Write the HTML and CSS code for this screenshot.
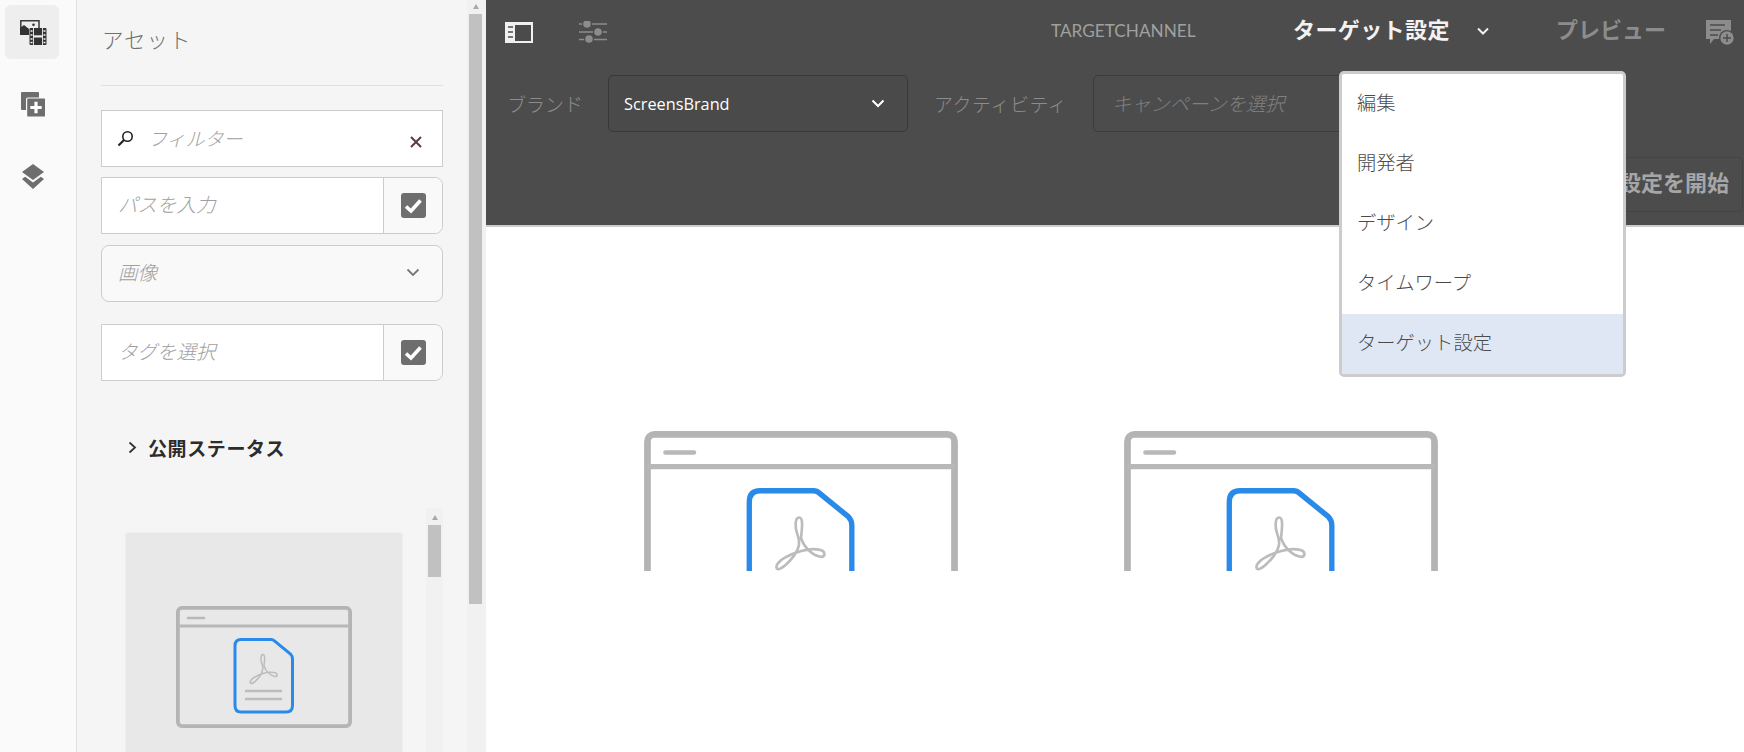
FILE: index.html
```html
<!DOCTYPE html>
<html lang="ja">
<head>
<meta charset="utf-8">
<title>TARGETCHANNEL</title>
<link rel="stylesheet" href="styles.css">
</head>
<body>
<svg class="defs" width="0" height="0" aria-hidden="true">
  <symbol id="pdf-window" viewBox="0 0 176 122">
    <rect x="1.900" y="1.900" width="172.200" height="118.200" rx="4" fill="none" stroke="#b4b4b4" stroke-width="3.800"/>
    <path d="M2 20H174" fill="none" stroke="#b8b8b8" stroke-width="3"/>
    <path d="M12 12H28" fill="none" stroke="#b8b8b8" stroke-width="2.500" stroke-linecap="round"/>
    <path d="M65 33.500H95Q97 33.500 98.500 35L114.500 48Q116.500 50 116.500 53V99.500Q116.500 106 110 106H65Q59 106 59 99.500V40Q59 33.500 65 33.500Z" fill="none" stroke="#2a8aea" stroke-width="3"/>
    <path d="M69 85H106M69 93H106" fill="none" stroke="#bcbcbc" stroke-width="2.400"/>
    <path d="M87 48.500C84.500 48.500 84.500 54 86 58C87.500 62 87.500 65 84 70C81 74 77 77.500 75 77.500C73 76.500 75 73 79 71C84 68 92 65.500 98 66.500C102 67 102 71 99 70.500C95 70 90 66 88 60C88.500 55 89.500 48.500 87 48.500Z" fill="none" stroke="#bcbcbc" stroke-width="1.500"/>
  </symbol>
</svg>

<div class="page">
  <nav class="rail">
    <button class="rail-btn rail-btn-active" type="button" aria-label="アセット">
      <svg width="27" height="25" viewBox="0 0 27 25">
        <path d="M.8 10V.8H19V8" fill="none" stroke="#3a3a3a" stroke-width="1.500"/>
        <path d="M0 15V8L4 5L9 9V15Z" fill="#333"/>
        <circle cx="13.500" cy="4.800" r="1.300" fill="#333"/>
        <rect x="9.500" y="8" width="17" height="17" rx="1" fill="#333"/>
        <path d="M13.500 8V25M22.500 8V25" stroke="#f0f0f0" stroke-width=".9"/>
        <rect x="13.500" y="15.300" width="9" height="2.200" fill="#f0f0f0"/>
        <path d="M10.500 11H12.500M10.500 15H12.500M10.500 19H12.500M10.500 22.500H12.500M23.500 11H25.500M23.500 15H25.500M23.500 19H25.500M23.500 22.500H25.500" stroke="#f4f4f4" stroke-width="1.300"/>
      </svg>
    </button>
    <button class="rail-btn" type="button" aria-label="コンポーネント">
      <svg width="25" height="25" viewBox="0 0 25 25">
        <rect x="0" y="0" width="18" height="18" rx="1" fill="#6e6e6e"/>
        <rect x="5.600" y="6" width="19" height="19" rx="1" fill="#6e6e6e" stroke="#fafafa" stroke-width="1.200"/>
        <path d="M15 9.700V21.300M9.300 15.500H20.700" stroke="#fff" stroke-width="3.200"/>
      </svg>
    </button>
    <button class="rail-btn" type="button" aria-label="レイヤー">
      <svg width="22" height="25" viewBox="0 0 22 25">
        <path d="M11 0L22 8L11 16L0 8Z" fill="#6e6e6e"/>
        <path d="M0 15L3.200 12.800L11 18.600L18.800 12.800L22 15L11 25Z" fill="#6e6e6e"/>
      </svg>
    </button>
  </nav>

  <aside class="panel">
    <div class="panel-body">
      <h2 class="panel-title">アセット</h2>
      <div class="field field-filter">
        <svg class="search-icon" width="17" height="17" viewBox="0 0 17 17">
          <circle cx="10.500" cy="6.500" r="4.700" fill="none" stroke="#222" stroke-width="1.600"/>
          <path d="M7 10L1.500 15.500" stroke="#222" stroke-width="2.200"/>
        </svg>
        <span class="ph ph-filter">フィルター</span>
        <svg class="clear-icon" width="12" height="12" viewBox="0 0 12 12">
          <path d="M1 1L11 11M11 1L1 11" stroke="#5a3c3c" stroke-width="2"/>
        </svg>
      </div>
      <div class="field field-check">
        <span class="ph">パスを入力</span>
        <span class="check-cell">
          <span class="check-box">
            <svg width="19" height="16" viewBox="0 0 19 16"><path d="M2 8.500L7 13L16.500 2.500" fill="none" stroke="#fff" stroke-width="3.600"/></svg>
          </span>
        </span>
      </div>
      <div class="field field-select">
        <span class="ph">画像</span>
        <svg class="select-chevron" width="14" height="9" viewBox="0 0 14 9"><path d="M1.500 1.500L7 7L12.500 1.500" fill="none" stroke="#777" stroke-width="1.800"/></svg>
      </div>
      <div class="field field-check field-tags">
        <span class="ph">タグを選択</span>
        <span class="check-cell">
          <span class="check-box">
            <svg width="19" height="16" viewBox="0 0 19 16"><path d="M2 8.500L7 13L16.500 2.500" fill="none" stroke="#fff" stroke-width="3.600"/></svg>
          </span>
        </span>
      </div>
      <div class="status-row">
        <svg width="9" height="13" viewBox="0 0 9 13"><path d="M1.500 1.500L7 6.500L1.500 11.500" fill="none" stroke="#333" stroke-width="1.800"/></svg>
        <span>公開ステータス</span>
      </div>
      <div class="asset-list">
        <div class="asset-card">
          <svg class="thumb-window" width="176" height="122"><use href="#pdf-window"/></svg>
        </div>
        <div class="mini-scroll">
          <span class="arrow-up"></span>
          <span class="mini-thumb"></span>
        </div>
      </div>
    </div>
    <div class="panel-scroll">
      <span class="arrow-up"></span>
      <span class="panel-thumb"></span>
    </div>
  </aside>

  <main class="main">
    <header class="toolbar">
      <div class="bar-top">
        <svg class="side-icon" width="28" height="21" viewBox="0 0 28 21">
          <rect width="28" height="21" fill="#f0f0f0"/>
          <rect x="10" y="3" width="16" height="16" fill="#4b4b4b"/>
          <path d="M3 5H8M3 10H8M3 15H8" stroke="#4b4b4b" stroke-width="1.400"/>
        </svg>
        <svg class="slider-icon" width="28" height="22" viewBox="0 0 28 22">
          <path d="M0 3H28M0 11H28M0 18.500H28" stroke="#8c8c8c" stroke-width="1.500"/>
          <circle cx="8" cy="3" r="5" fill="#4b4b4b"/><circle cx="8" cy="3" r="3.800" fill="#8c8c8c"/>
          <circle cx="19" cy="11" r="5" fill="#4b4b4b"/><circle cx="19" cy="11" r="3.800" fill="#8c8c8c"/>
          <circle cx="10" cy="18" r="5" fill="#4b4b4b"/><circle cx="10" cy="18" r="3.800" fill="#8c8c8c"/>
        </svg>
        <span class="channel">TARGETCHANNEL</span>
        <span class="mode">ターゲット設定</span>
        <svg class="mode-chevron" width="12" height="8" viewBox="0 0 12 8"><path d="M1 1.500L6 6.500L11 1.500" fill="none" stroke="#f0f0f0" stroke-width="2"/></svg>
        <span class="preview">プレビュー</span>
        <svg class="comment-icon" width="29" height="27" viewBox="0 0 29 27">
          <path d="M0 1H25V20H8L4 25V20H0Z" fill="#8c8c8c"/>
          <path d="M4 6H19M4 11H15M4 16H12" stroke="#4b4b4b" stroke-width="1.500"/>
          <circle cx="21" cy="19" r="8" fill="#4b4b4b"/>
          <circle cx="21" cy="19" r="6.700" fill="#8c8c8c"/>
          <path d="M21 15V23M17 19H25" stroke="#4b4b4b" stroke-width="1.400"/>
        </svg>
      </div>
      <div class="bar-mid">
        <span class="bar-label">ブランド</span>
        <div class="dark-select">
          <span>ScreensBrand</span>
          <svg width="14" height="9" viewBox="0 0 14 9"><path d="M1.500 1.500L7 7L12.500 1.500" fill="none" stroke="#fff" stroke-width="2"/></svg>
        </div>
        <span class="bar-label bar-label-activity">アクティビティ</span>
        <div class="dark-input">キャンペーンを選択</div>
      </div>
      <div class="bar-low">
        <button class="start-btn" type="button">ターゲット設定を開始</button>
      </div>
    </header>
    <section class="canvas">
      <svg class="canvas-window" width="314" height="140" viewBox="0 0 176 78.500"><use href="#pdf-window" width="176" height="122"/></svg>
      <svg class="canvas-window" width="314" height="140" viewBox="0 0 176 78.500"><use href="#pdf-window" width="176" height="122"/></svg>
    </section>
    <ul class="mode-menu">
      <li class="mode-item">編集</li>
      <li class="mode-item">開発者</li>
      <li class="mode-item">デザイン</li>
      <li class="mode-item">タイムワープ</li>
      <li class="mode-item mode-item-active">ターゲット設定</li>
    </ul>
  </main>
</div>
</body>
</html>
```
FILE: styles.css
```css
* { box-sizing: border-box; }
html, body { margin: 0; height: 100%; overflow: hidden; background: #fff; }
body { font-family: "Open Sans", "Noto Sans CJK JP", sans-serif; color: #4b4b4b; }
.defs { position: absolute; }
.page { display: flex; width: 1744px; height: 752px; overflow: hidden; }

/* left rail */
.rail { flex: 0 0 77px; padding: 5px 0 0 5px; display: flex; flex-direction: column; gap: 18px; background: #fafafa; border-right: 1px solid #e0e0e0; }
.rail-btn { width: 54px; height: 54px; padding: 0 0 0 2px; border: 0; border-radius: 6px; background: transparent; display: flex; align-items: center; justify-content: center; }
.rail-btn-active { background: #eee; }

/* asset panel */
.panel { flex: 0 0 409px; display: flex; background: #f5f5f5; overflow: hidden; }
.panel-body { flex: 0 0 390px; padding: 0 24px; }
.panel-title { margin: 0 0 24px; height: 86px; padding: 24px 0 0 1px; border-bottom: 1px solid #e0e0e0; font-family: "Noto Sans CJK JP", sans-serif; font-size: 21.500px; line-height: 30px; font-weight: 300; letter-spacing: 1px; color: #707070; }
.panel-scroll { flex: 0 0 19px; background: #f1f1f1; padding: 0 4px 0 2px; display: flex; flex-direction: column; align-items: center; }
.panel-thumb { width: 13px; height: 590px; background: #c1c1c1; }
.arrow-up { display: block; flex: none; width: 0; height: 0; margin: 4px 0 5px; border: 3.500px solid transparent; border-top: 0; border-bottom: 5px solid #a8a8a8; }

.field { display: flex; align-items: center; height: 57px; margin-bottom: 10px; border: 1px solid #ccc; background: #fff; }
.ph { flex: 1; margin-bottom: 5px; padding-left: 16px; font-family: "Noto Sans CJK JP", sans-serif; font-size: 19.500px; font-style: italic; font-weight: 300; color: #a0a0a0; }
.field-filter { padding: 0 20px 0 15px; }
.ph-filter { margin-bottom: 3px; padding-left: 14px; font-size: 19px; }
.search-icon { flex: none; }
.clear-icon { flex: none; margin-top: 7px; }
.field-check { border-radius: 0 8px 8px 0; }
.check-cell { flex: 0 0 59px; align-self: stretch; display: flex; align-items: center; justify-content: center; border-left: 1px solid #ccc; background: #f9f9f9; border-radius: 0 8px 8px 0; }
.check-box { width: 25px; height: 25px; border-radius: 3px; background: #6e6e6e; display: flex; align-items: center; justify-content: center; }
.field-select { margin: 11px 0 22px; padding-right: 22px; border-radius: 8px; background: #f9f9f9; }
.select-chevron { margin-bottom: 3px; }
.field-tags { margin-bottom: 0; }

.status-row { display: flex; align-items: center; gap: 11px; height: 40px; margin: 46px 0 41px 27px; font-family: "Noto Sans CJK JP", sans-serif; font-size: 19px; font-weight: 700; letter-spacing: .6px; color: #2c2c2c; }
.asset-list { display: flex; justify-content: space-between; height: 244px; }
.asset-card { flex: 0 0 278px; margin: 24px 0 0 24px; height: 220px; padding-top: 73px; background: #e8e8e8; border: 1px solid #efefef; border-bottom: 0; border-radius: 3px 3px 0 0; display: flex; justify-content: center; align-items: flex-start; }
.thumb-window { filter: blur(.55px); }
.mini-scroll { flex: 0 0 17px; padding-top: 3px; background: #f1f1f1; display: flex; flex-direction: column; align-items: center; }
.mini-thumb { width: 13px; height: 52px; background: #c1c1c1; }

/* main */
.main { flex: 1; position: relative; display: flex; flex-direction: column; min-width: 0; }
.toolbar { flex: 0 0 227px; background: #4c4c4c; border-bottom: 2px solid #ccc; }
.bar-top { display: flex; align-items: center; height: 64px; padding-left: 19px; }
.slider-icon { margin-left: 46px; }
.channel { flex: none; width: 242px; margin-left: 444px; margin-bottom: 3px; font-family: "Lato", sans-serif; font-size: 17.200px; color: #a0a0a0; }
.mode { flex: none; width: 184px; margin-bottom: 9px; font-family: "Noto Sans CJK JP", sans-serif; font-size: 22px; font-weight: 700; letter-spacing: .4px; color: #f2f2f2; line-height: 1; }
.mode-chevron { flex: none; margin-bottom: 2px; }
.preview { flex: none; width: 150px; margin: 0 0 9px 67px; font-family: "Noto Sans CJK JP", sans-serif; font-size: 22px; font-weight: 700; color: #8c8c8c; line-height: 1; }
.comment-icon { flex: none; }
.bar-mid { display: flex; align-items: center; height: 56px; margin-top: 11px; padding-left: 21px; }
.bar-label { flex: none; width: 101px; font-family: "Noto Sans CJK JP", sans-serif; font-size: 19px; font-weight: 300; color: #8c8c8c; }
.bar-label-activity { width: 159px; margin-left: 26px; letter-spacing: .5px; }
.dark-select { flex: none; width: 300px; height: 57px; padding: 1px 22px 0 15px; display: flex; align-items: center; justify-content: space-between; border: 1px solid #383838; border-radius: 5px; background: #4a4a4a; font-size: 16.300px; font-weight: 500; color: #fff; }
.dark-input { flex: none; width: 400px; height: 57px; padding-left: 18px; line-height: 54px; border: 1px solid #3c3c3c; border-radius: 5px; background: #4c4c4c; font-family: "Noto Sans CJK JP", sans-serif; font-size: 19.300px; font-style: italic; font-weight: 300; color: #808080; }
.bar-low { display: flex; justify-content: flex-end; margin-top: 26px; padding-right: 1px; }
.start-btn { width: 248px; height: 55px; padding: 0 13px 7px 0; text-align: right; border: 1px solid #444; border-radius: 5px; background: #4c4c4c; font-family: "Noto Sans CJK JP", sans-serif; font-size: 22px; font-weight: 700; color: #a6a6a6; }

.canvas { flex: 1; display: flex; gap: 166px; padding: 204px 0 0 158px; background: #fff; align-items: flex-start; }
.canvas-window { flex: none; filter: blur(.6px); clip-path: inset(-3px -3px 0 -3px); }

.mode-menu { position: absolute; top: 71px; left: 853px; width: 287px; margin: 0; padding: 0; list-style: none; background: #fff; border: 3px solid #ccc; border-radius: 5px; overflow: hidden; }
.mode-item { height: 60px; padding-left: 15px; font-family: "Noto Sans CJK JP", sans-serif; font-size: 19.300px; font-weight: 300; line-height: 56px; color: #4b4b4b; }
.mode-item-active { background: #dfe7f5; }
```
